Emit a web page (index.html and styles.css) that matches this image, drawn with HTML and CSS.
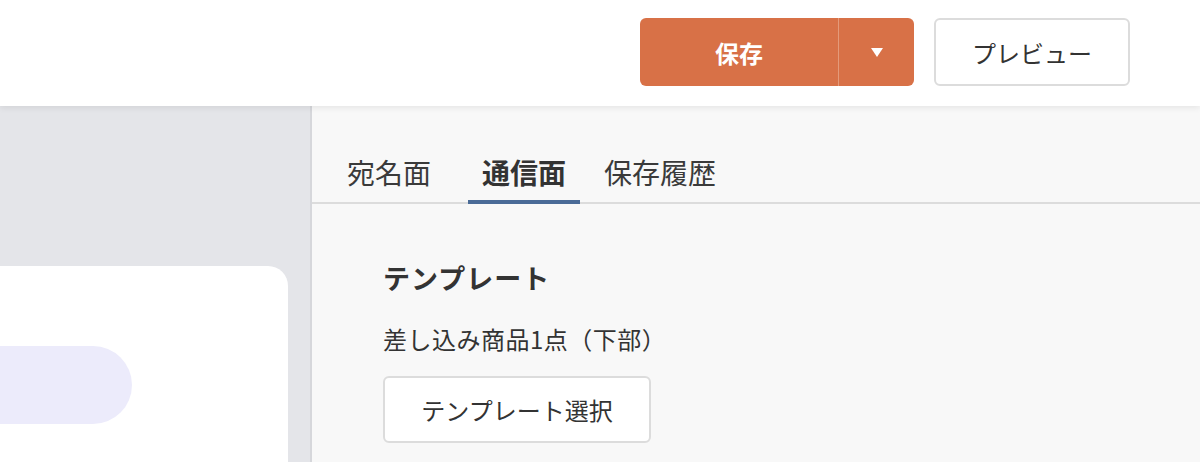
FILE: index.html
```html
<!DOCTYPE html>
<html lang="ja">
<head>
<meta charset="utf-8">
<link rel="stylesheet" href="styles.css">
</head>
<body>
<header class="header">
  <div class="save-group">
    <button class="save-main">保存</button>
    <button class="save-caret" aria-label="menu"><span class="caret"></span></button>
  </div>
  <button class="preview-btn">プレビュー</button>
</header>
<div class="main">
  <aside class="canvas">
    <div class="card">
      <div class="pill"></div>
    </div>
  </aside>
  <section class="panel">
    <nav class="tabs">
      <div class="tab tab-first">宛名面</div>
      <div class="tab tab-active">通信面</div>
      <div class="tab tab-last">保存履歴</div>
    </nav>
    <div class="content">
      <h2 class="heading">テンプレート</h2>
      <p class="template-name">差し込み商品1点（下部）</p>
      <button class="select-btn">テンプレート選択</button>
    </div>
  </section>
</div>
</body>
</html>
```
FILE: styles.css
```css
* { box-sizing: border-box; }
html, body { margin: 0; padding: 0; }
body {
  width: 1200px;
  height: 462px;
  overflow: hidden;
  font-family: "Noto Sans CJK JP", "Noto Sans", sans-serif;
  color: #333;
  background: #f8f8f8;
  text-spacing-trim: space-all;
}
button { font-family: inherit; cursor: pointer; }

.header {
  position: relative;
  z-index: 2;
  height: 106px;
  background: #fff;
  box-shadow: 0 2px 6px rgba(0,0,0,0.08);
  display: flex;
  justify-content: flex-end;
  align-items: flex-start;
  padding: 18px 70px 0 0;
  gap: 20px;
}
.save-group {
  display: flex;
  height: 68px;
  width: 274px;
  background: #d87147;
  border-radius: 6px;
  overflow: hidden;
}
.save-main {
  width: 199px;
  border: none;
  border-right: 1px solid #e49a7a;
  background: transparent;
  color: #fff;
  font-size: 24px;
  font-weight: 700;
  padding: 0;
}
.save-caret {
  flex: 1;
  border: none;
  background: transparent;
  display: flex;
  align-items: center;
  justify-content: center;
  padding: 0;
}
.caret {
  width: 0;
  height: 0;
  border-left: 6px solid transparent;
  border-right: 6px solid transparent;
  border-top: 9px solid #fff;
}
.preview-btn {
  width: 196px;
  height: 68px;
  background: #fff;
  border: 2px solid #dcdcdc;
  border-radius: 6px;
  font-size: 24px;
  color: #333;
  padding: 0;
}

.main {
  display: flex;
  height: 356px;
  overflow: hidden;
}
.canvas {
  width: 312px;
  background: #e4e5e9;
  border-right: 2px solid #d6d7db;
  padding-top: 160px;
}
.card {
  width: 288px;
  height: 196px;
  background: #fff;
  border-top-right-radius: 20px;
  padding-top: 80px;
}
.pill {
  width: 132px;
  height: 78px;
  background: #ecebfb;
  border-radius: 0 39px 39px 0;
}

.panel {
  flex: 1;
  background: #f8f8f8;
}
.tabs {
  display: flex;
  padding: 46px 0 0 21px;
  border-bottom: 2px solid #dcdcdc;
  height: 98px;
}
.tab {
  font-size: 28px;
  line-height: 40px;
  padding: 0 14px 8px;
  border-bottom: 4px solid transparent;
  margin-bottom: -2px;
  color: #3a3a3a;
  height: 52px;
  white-space: nowrap;
}
.tab-first { margin-right: 23px; }
.tab-active {
  font-weight: 700;
  color: #333;
  border-bottom-color: #4a6b97;
  margin-right: 10px;
}

.content {
  padding: 56px 0 0 71px;
}
.heading {
  margin: 0;
  font-size: 27px;
  line-height: 36px;
  letter-spacing: 1px;
  font-weight: 700;
  color: #333;
}
.template-name {
  margin: 26px 0 0;
  font-size: 24px;
  line-height: 34px;
  letter-spacing: 0.5px;
  color: #333;
}
.select-btn {
  margin-top: 20px;
  width: 268px;
  height: 67px;
  background: #fff;
  border: 2px solid #dcdcdc;
  border-radius: 6px;
  font-size: 24px;
  color: #333;
  padding: 0;
}
```
